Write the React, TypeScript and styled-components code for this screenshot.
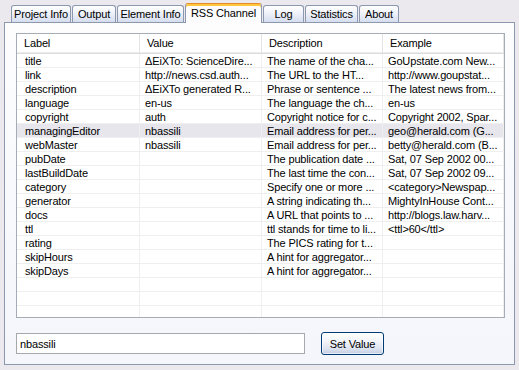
import React from "react";
import styled, { createGlobalStyle } from "styled-components";

const GlobalStyle = createGlobalStyle`
  html, body {
    margin: 0;
    padding: 0;
    background: #ebe9ed;
  }
  body {
    font-family: Tahoma, "Liberation Sans", Arial, sans-serif;
    font-size: 11px;
    letter-spacing: -0.15px;
    color: #000;
  }
`;

const Window = styled.div`
  width: 519px;
  height: 370px;
  box-sizing: border-box;
  padding: 3px 0 0 4px;
  background: #ebe9ed;
  display: flex;
  flex-direction: column;
`;

const TabStrip = styled.div`
  display: flex;
  align-items: flex-end;
  gap: 1px;
  height: 19px;
  padding-left: 7px;
  position: relative;
  z-index: 1;
`;

const Tab = styled.div<{ $w: number; $active?: boolean }>`
  width: ${(p) => p.$w}px;
  box-sizing: border-box;
  height: ${(p) => (p.$active ? 20 : 17)}px;
  margin-bottom: ${(p) => (p.$active ? -1 : 0)}px;
  border: 1px solid #8c98ae;
  border-bottom: none;
  border-radius: 3px 3px 0 0;
  background: ${(p) =>
    p.$active
      ? "#fcfcfe"
      : "linear-gradient(#ffffff 0%, #f3f5fb 35%, #d5ddef 100%)"};
  border-top-color: ${(p) => (p.$active ? "#e68b2c" : "#8c98ae")};
  box-shadow: ${(p) => (p.$active ? "inset 0 2px 0 #ffc73c" : "none")};
  text-align: center;
  line-height: 15px;
  padding-top: ${(p) => (p.$active ? 2 : 1)}px;
  white-space: nowrap;
  overflow: hidden;
`;

const Panel = styled.div`
  width: 511px;
  height: 343px;
  box-sizing: border-box;
  border: 1px solid #8c98ae;
  background: linear-gradient(#fdfdfe 0%, #f8f9fc 50%, #f4f6fb 100%);
  padding: 10px 0 0 11px;
  display: flex;
  flex-direction: column;
`;

const ListView = styled.div`
  width: 489px;
  height: 285px;
  box-sizing: border-box;
  border: 1px solid #a5acb5;
  background: #fff;
  overflow: hidden;
`;

const COLS = "123px 122px 121px 121px";

const HeaderRow = styled.div`
  display: grid;
  grid-template-columns: ${COLS};
  height: 20px;
  box-sizing: border-box;
  border-bottom: 1px solid #dcdcdc;
  box-shadow: 0 -1px 0 #ececec inset;
`;

const HeaderCell = styled.div`
  padding: 0 5px 0 7px;
  line-height: 19px;
  border-right: 1px solid #e3e3e3;
  white-space: nowrap;
  overflow: hidden;
`;

const Row = styled.div<{ $selected?: boolean }>`
  display: grid;
  grid-template-columns: ${COLS};
  height: 14px;
  box-sizing: border-box;
  border-bottom: 1px solid #efefef;
  background: ${(p) => (p.$selected ? "#e7e6ec" : "transparent")};
`;

const Cell = styled.div`
  padding: 0 2px 0 5px;
  line-height: 14px;
  border-right: 1px solid #efefef;
  white-space: nowrap;
  overflow: hidden;
  &:first-child {
    padding-left: 8px;
  }
`;

const FormRow = styled.div`
  display: flex;
  align-items: center;
  margin-top: 14px;
  height: 23px;
`;

const TextBox = styled.input`
  width: 289px;
  height: 21px;
  box-sizing: border-box;
  border: 1px solid #a5a9ae;
  background: #fff;
  font: inherit;
  font-size: 11px;
  letter-spacing: -0.15px;
  padding: 0 0 0 3px;
  margin: 0;
  outline: none;
  color: #000;
`;

const Button = styled.button`
  width: 63px;
  height: 23px;
  margin-left: 16px;
  box-sizing: border-box;
  border: 1px solid #003c74;
  border-radius: 3px;
  background: linear-gradient(#ffffff 0%, #f2f4f9 40%, #dde3ef 75%, #c3cde2 100%);
  box-shadow: inset 0 0 0 1px rgba(255, 255, 255, 0.6);
  font: inherit;
  font-size: 11px;
  letter-spacing: -0.15px;
  color: #000;
  padding: 0;
`;

const tabs = [
  { label: "Project Info", w: 60 },
  { label: "Output", w: 44 },
  { label: "Element Info", w: 67 },
  { label: "RSS Channel", w: 77, active: true },
  { label: "Log", w: 41 },
  { label: "Statistics", w: 53 },
  { label: "About", w: 40 },
];

const rows: [string, string, string, string][] = [
  ["title", "ΔEiXTo: ScienceDire...", "The name of the cha...", "GoUpstate.com New..."],
  ["link", "http://news.csd.auth...", "The URL to the HT...", "http://www.goupstat..."],
  ["description", "ΔEiXTo generated R...", "Phrase or sentence ...", "The latest news from..."],
  ["language", "en-us", "The language the ch...", "en-us"],
  ["copyright", "auth", "Copyright notice for c...", "Copyright 2002, Spar..."],
  ["managingEditor", "nbassili", "Email address for per...", "geo@herald.com (G..."],
  ["webMaster", "nbassili", "Email address for per...", "betty@herald.com (B..."],
  ["pubDate", "", "The publication date ...", "Sat, 07 Sep 2002 00..."],
  ["lastBuildDate", "", "The last time the con...", "Sat, 07 Sep 2002 09..."],
  ["category", "", "Specify one or more ...", "<category>Newspap..."],
  ["generator", "", "A string indicating th...", "MightyInHouse Cont..."],
  ["docs", "", "A URL that points to ...", "http://blogs.law.harv..."],
  ["ttl", "", "ttl stands for time to li...", "<ttl>60</ttl>"],
  ["rating", "", "The PICS rating for t...", ""],
  ["skipHours", "", "A hint for aggregator...", ""],
  ["skipDays", "", "A hint for aggregator...", ""],
];

export default function App() {
  return (
    <>
      <GlobalStyle />
      <Window>
        <TabStrip>
          {tabs.map((t) => (
            <Tab key={t.label} $w={t.w} $active={t.active}>
              {t.label}
            </Tab>
          ))}
        </TabStrip>
        <Panel>
          <ListView>
            <HeaderRow>
              <HeaderCell>Label</HeaderCell>
              <HeaderCell>Value</HeaderCell>
              <HeaderCell>Description</HeaderCell>
              <HeaderCell>Example</HeaderCell>
            </HeaderRow>
            {rows.map((r) => (
              <Row key={r[0]} $selected={r[0] === "managingEditor"}>
                {r.map((c, i) => (
                  <Cell key={i}>{c}</Cell>
                ))}
              </Row>
            ))}
            {[0, 1, 2].map((i) => (
              <Row key={"empty" + i}>
                <Cell />
                <Cell />
                <Cell />
                <Cell />
              </Row>
            ))}
          </ListView>
          <FormRow>
            <TextBox defaultValue="nbassili" />
            <Button>Set Value</Button>
          </FormRow>
        </Panel>
      </Window>
    </>
  );
}
